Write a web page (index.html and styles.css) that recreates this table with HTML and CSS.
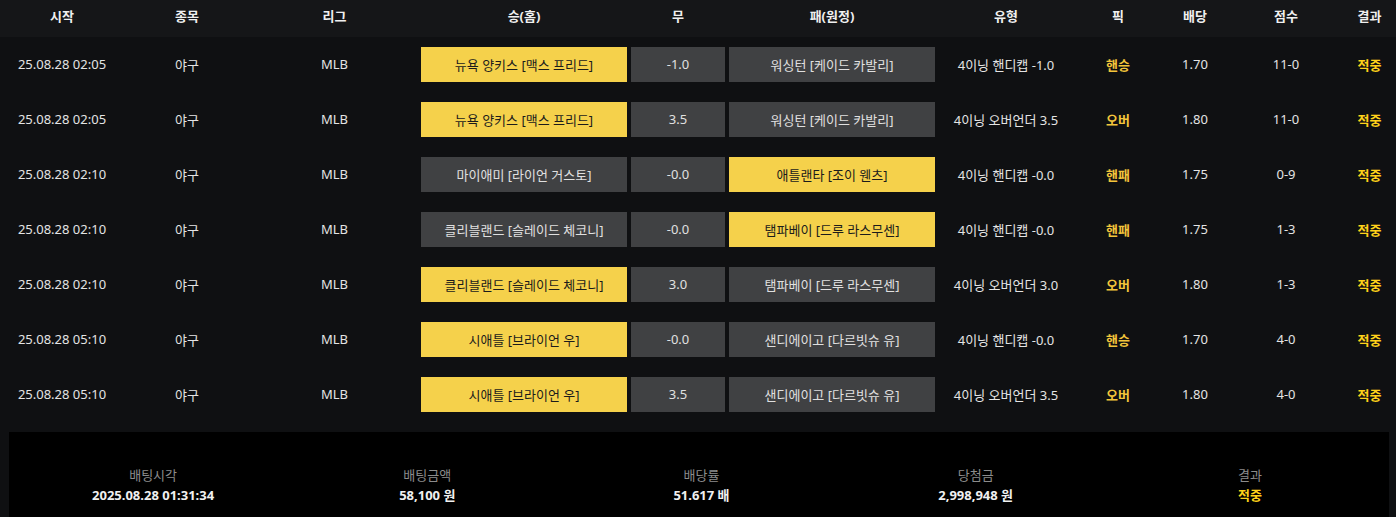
FILE: index.html
```html
<!DOCTYPE html>
<html lang="ko">
<head>
<meta charset="utf-8">
<link rel="stylesheet" href="styles.css">
</head>
<body>
<div class="page">
  <div class="row head">
    <div class="c">시작</div><div class="c">종목</div><div class="c">리그</div>
    <div class="c">승(홈)</div><div class="c">무</div><div class="c">패(원정)</div>
    <div class="c">유형</div><div class="c">픽</div><div class="c">배당</div>
    <div class="c">점수</div><div class="c">결과</div>
  </div>

  <div class="row">
    <div class="c">25.08.28 02:05</div><div class="c">야구</div><div class="c">MLB</div>
    <div class="c"><span class="box on">뉴욕 양키스 [맥스 프리드]</span></div>
    <div class="c"><span class="box">-1.0</span></div>
    <div class="c"><span class="box">워싱턴 [케이드 카발리]</span></div>
    <div class="c">4이닝 핸디캡 -1.0</div><div class="c pick">핸승</div><div class="c">1.70</div>
    <div class="c">11-0</div><div class="c res">적중</div>
  </div>

  <div class="row">
    <div class="c">25.08.28 02:05</div><div class="c">야구</div><div class="c">MLB</div>
    <div class="c"><span class="box on">뉴욕 양키스 [맥스 프리드]</span></div>
    <div class="c"><span class="box">3.5</span></div>
    <div class="c"><span class="box">워싱턴 [케이드 카발리]</span></div>
    <div class="c">4이닝 오버언더 3.5</div><div class="c pick">오버</div><div class="c">1.80</div>
    <div class="c">11-0</div><div class="c res">적중</div>
  </div>

  <div class="row">
    <div class="c">25.08.28 02:10</div><div class="c">야구</div><div class="c">MLB</div>
    <div class="c"><span class="box">마이애미 [라이언 거스토]</span></div>
    <div class="c"><span class="box">-0.0</span></div>
    <div class="c"><span class="box on">애틀랜타 [조이 웬츠]</span></div>
    <div class="c">4이닝 핸디캡 -0.0</div><div class="c pick">핸패</div><div class="c">1.75</div>
    <div class="c">0-9</div><div class="c res">적중</div>
  </div>

  <div class="row">
    <div class="c">25.08.28 02:10</div><div class="c">야구</div><div class="c">MLB</div>
    <div class="c"><span class="box">클리블랜드 [슬레이드 체코니]</span></div>
    <div class="c"><span class="box">-0.0</span></div>
    <div class="c"><span class="box on">탬파베이 [드루 라스무센]</span></div>
    <div class="c">4이닝 핸디캡 -0.0</div><div class="c pick">핸패</div><div class="c">1.75</div>
    <div class="c">1-3</div><div class="c res">적중</div>
  </div>

  <div class="row">
    <div class="c">25.08.28 02:10</div><div class="c">야구</div><div class="c">MLB</div>
    <div class="c"><span class="box on">클리블랜드 [슬레이드 체코니]</span></div>
    <div class="c"><span class="box">3.0</span></div>
    <div class="c"><span class="box">탬파베이 [드루 라스무센]</span></div>
    <div class="c">4이닝 오버언더 3.0</div><div class="c pick">오버</div><div class="c">1.80</div>
    <div class="c">1-3</div><div class="c res">적중</div>
  </div>

  <div class="row">
    <div class="c">25.08.28 05:10</div><div class="c">야구</div><div class="c">MLB</div>
    <div class="c"><span class="box on">시애틀 [브라이언 우]</span></div>
    <div class="c"><span class="box">-0.0</span></div>
    <div class="c"><span class="box">샌디에이고 [다르빗슈 유]</span></div>
    <div class="c">4이닝 핸디캡 -0.0</div><div class="c pick">핸승</div><div class="c">1.70</div>
    <div class="c">4-0</div><div class="c res">적중</div>
  </div>

  <div class="row">
    <div class="c">25.08.28 05:10</div><div class="c">야구</div><div class="c">MLB</div>
    <div class="c"><span class="box on">시애틀 [브라이언 우]</span></div>
    <div class="c"><span class="box">3.5</span></div>
    <div class="c"><span class="box">샌디에이고 [다르빗슈 유]</span></div>
    <div class="c">4이닝 오버언더 3.5</div><div class="c pick">오버</div><div class="c">1.80</div>
    <div class="c">4-0</div><div class="c res">적중</div>
  </div>

  <div class="summary">
    <div class="item"><div class="label">배팅시각</div><div class="value">2025.08.28 01:31:34</div></div>
    <div class="item"><div class="label">배팅금액</div><div class="value">58,100 원</div></div>
    <div class="item"><div class="label">배당률</div><div class="value">51.617 배</div></div>
    <div class="item"><div class="label">당첨금</div><div class="value">2,998,948 원</div></div>
    <div class="item"><div class="label">결과</div><div class="value res">적중</div></div>
  </div>
</div>
</body>
</html>
```

FILE: styles.css
```css
html, body {
  margin: 0;
  padding: 0;
  background: #0f1012;
}
body {
  font-family: "Noto Sans", "Noto Sans CJK KR", sans-serif;
  font-size: 13px;
  color: #e4e4e4;
}
.page {
  width: 1396px;
}
.row {
  display: grid;
  grid-template-columns: 124px 126px 169px 210px 98px 210px 138px 86px 68px 114px 53px;
  height: 55px;
  align-items: center;
}
.row.head {
  height: 37px;
  background: #151618;
  font-weight: bold;
  color: #f0f0f0;
}
.row.head .c {
  padding-bottom: 6px;
}
.c {
  text-align: center;
  white-space: nowrap;
  padding-bottom: 1px;
}
.box {
  display: flex;
  align-items: center;
  justify-content: center;
  height: 35px;
  margin: 0 2px;
  background: #404143;
  color: #e0e0e0;
}
.box.on {
  background: #f5d14b;
  color: #1b1b1b;
}
.pick {
  color: #f3c53b;
  font-weight: bold;
}
.res {
  color: #ffd21a;
  font-weight: bold;
}
.summary {
  margin: 10px 0 0 9px;
  width: 1380px;
  height: 90px;
  background: #000;
  display: grid;
  grid-template-columns: repeat(5, 1fr);
  padding: 33px 2px 0 7px;
  box-sizing: border-box;
}
.item {
  text-align: center;
}
.label {
  color: #8c8c8c;
  font-size: 13px;
  line-height: 20px;
}
.value {
  color: #f0f0f0;
  font-weight: bold;
  font-size: 13px;
  line-height: 20px;
}
.value.res {
  color: #ffd21a;
}
```
